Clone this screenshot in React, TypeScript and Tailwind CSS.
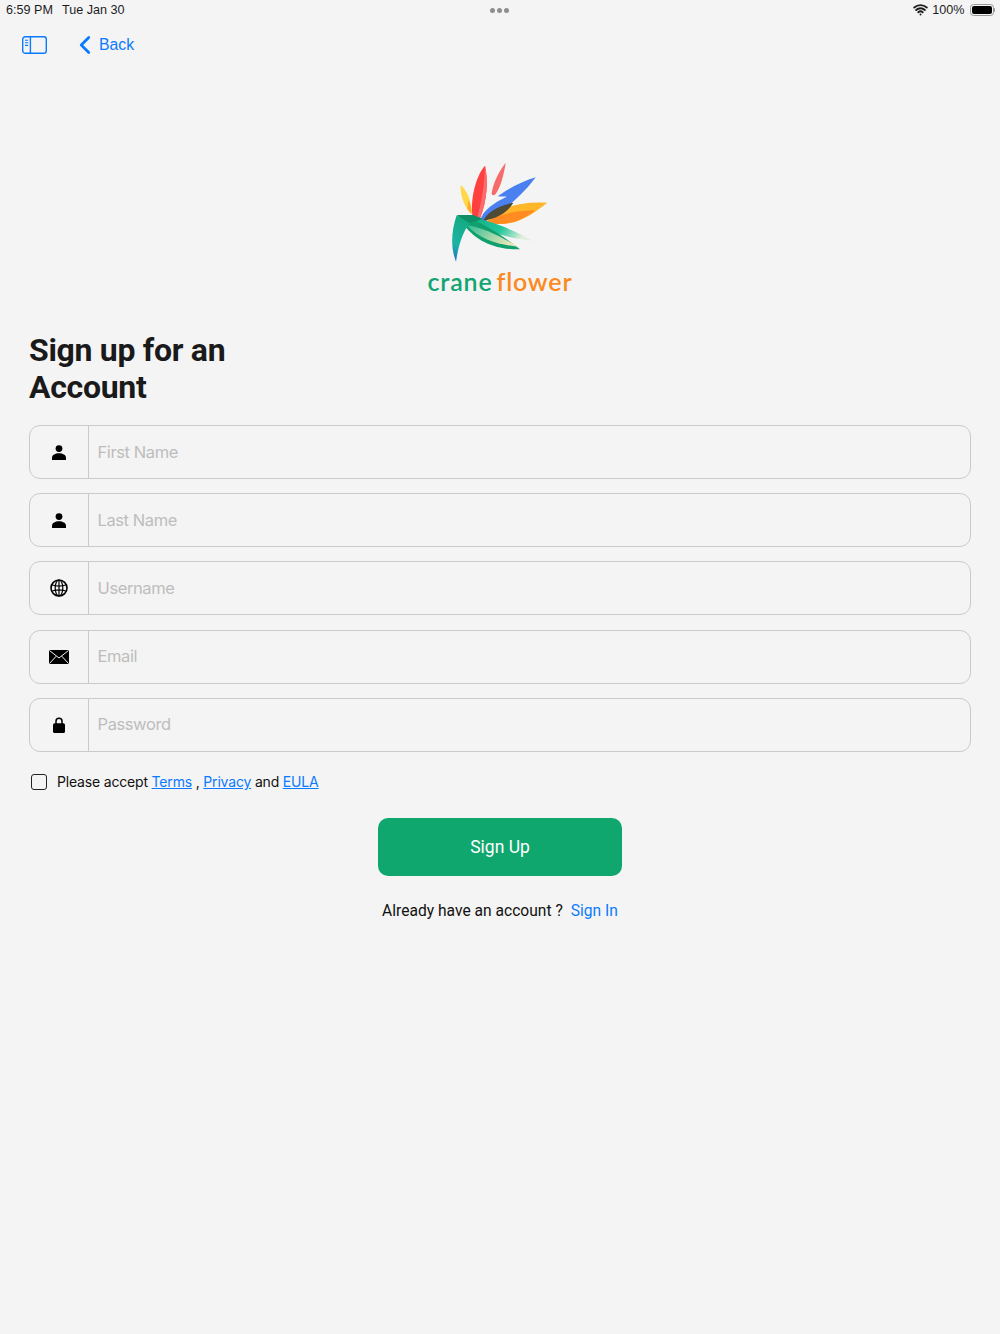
import { ChevronLeft, Wifi } from "lucide-react";
import type { ReactNode } from "react";

function UserIcon() {
  return (
    <svg width="14" height="15" viewBox="0 0 14 15" fill="#000">
      <circle cx="7" cy="3.6" r="3.4" />
      <path d="M0 15v-2.4C0 9.8 3.4 8.2 7 8.2s7 1.6 7 4.4V15z" />
    </svg>
  );
}

function GlobeIcon() {
  return (
    <svg width="18" height="18" viewBox="0 0 18 18" fill="none" stroke="#000" strokeWidth="1.2">
      <circle cx="9" cy="9" r="8" strokeWidth="1.6" />
      <ellipse cx="9" cy="9" rx="3.8" ry="8" />
      <path d="M9 1v16M1.6 5.8c4.2 1.5 10.6 1.5 14.8 0M1.6 12.2c4.2-1.5 10.6-1.5 14.8 0" />
    </svg>
  );
}

function MailIcon() {
  return (
    <svg width="20" height="14" viewBox="0 0 20 14">
      <rect width="20" height="14" rx="1.2" fill="#000" />
      <path d="M.6.6 10 8l9.4-7.4M.6 13.4l6.6-7.2M19.4 13.4l-6.6-7.2" fill="none" stroke="#f4f4f4" strokeWidth="1" />
    </svg>
  );
}

function LockIcon() {
  return (
    <svg width="12" height="16" viewBox="0 0 12 16">
      <path d="M3 7V4.2a3 3 0 0 1 6 0V7" fill="none" stroke="#000" strokeWidth="1.5" />
      <rect y="6.2" width="12" height="9.8" rx="1.6" fill="#000" />
    </svg>
  );
}

function SidebarIcon() {
  return (
    <svg width="25" height="18" viewBox="0 0 25 18" fill="none" stroke="#0a7aff" strokeWidth="1.4">
      <rect x=".7" y=".7" width="23.6" height="16.6" rx="2.6" />
      <path d="M8.4.7v16.6" />
      <path d="M3 4.2h3.2M3 6.8h3.2M3 9.4h3.2" strokeWidth="1.1" />
    </svg>
  );
}

function Logo() {
  return (
    <svg width="100" height="105" viewBox="0 0 300 315">
      <defs>
        <linearGradient id="tealFade" x1="0" y1="0" x2="1" y2="0.3">
          <stop offset="0" stopColor="#0fae84" />
          <stop offset="0.6" stopColor="#22c59a" />
          <stop offset="1" stopColor="#e2efdc" />
        </linearGradient>
        <linearGradient id="paleFade" x1="0" y1="0" x2="1" y2="0.4">
          <stop offset="0" stopColor="#2bbd95" />
          <stop offset="1" stopColor="#e6e6b8" />
        </linearGradient>
        <linearGradient id="leftLeaf" x1="0.5" y1="0" x2="0.3" y2="1">
          <stop offset="0" stopColor="#12ab80" />
          <stop offset="0.65" stopColor="#1db3a4" />
          <stop offset="1" stopColor="#1c78c4" />
        </linearGradient>
      </defs>
      <g transform="translate(-150 -30)">
        <path d="M182 105c18 15 33 45 33 87-20-17-35-52-33-87z" fill="#ffd84a" />
        <path d="M205 150c8 14 10 28 10 42-5-4-9-9-13-15z" fill="#ffa928" />
        <path d="M217 197c-7-65 18-130 38-150 10 43 7 103-15 158z" fill="#ff4040" />
        <path d="M255 47c10 43 7 103-15 158l-8-4c15-50 22-110 23-154z" fill="#ff6a6a" />
        <path d="M275 130c5-35 25-70 42-92-5 37-17 77-30 94-5 6-13 4-12-2z" fill="#f76b6b" />
        <path d="M240 212c8-32 45-56 80-72-8-2-20 2-26-2 30-22 75-45 113-56-30 42-95 105-150 132z" fill="#4a80f0" />
        <path d="M258 216C285 180 350 152 442 158 400 190 340 240 258 216z" fill="#ffb628" />
        <path d="M258 216C290 195 350 180 405 182 375 205 320 235 258 216z" fill="#ff8b22" />
        <path d="M250 212C258 190 290 168 340 158 325 185 295 205 250 212z" fill="#4d4a38" />
        <path d="M205 205c55 0 135 35 193 67-58-4-138-22-193-67z" fill="url(#tealFade)" />
        <path d="M175 197c55 8 125 53 185 101-70 2-145-23-185-101z" fill="#10a06d" />
        <path d="M200 225c50 7 105 37 155 65-55-5-115-20-155-65z" fill="url(#paleFade)" />
        <path d="M170 196c-15 44-20 94-2 139 7-45 17-85 42-117z" fill="url(#leftLeaf)" />
        <path d="M170 195h50l30 12-42 12z" fill="#0e8f66" />
      </g>
    </svg>
  );
}

const fields: { label: string; icon: ReactNode }[] = [
  { label: "First Name", icon: <UserIcon /> },
  { label: "Last Name", icon: <UserIcon /> },
  { label: "Username", icon: <GlobeIcon /> },
  { label: "Email", icon: <MailIcon /> },
  { label: "Password", icon: <LockIcon /> },
];

export default function App() {
  return (
    <div className="flex h-[1334px] flex-col overflow-hidden bg-[#f4f4f4] font-['Inter',sans-serif] text-black">
      {/* status bar */}
      <div className="relative flex h-[20px] items-center justify-between pl-[6px] pr-[5px] font-['Liberation_Sans',sans-serif] text-[12.6px] text-[#1c1c1e]">
        <div className="flex gap-[9px]">
          <span>6:59 PM</span>
          <span>Tue Jan 30</span>
        </div>
        <div className="absolute left-[490px] top-[8px] flex gap-[2px]">
          <span className="h-[5px] w-[5px] rounded-full bg-[#8e8e8e]" />
          <span className="h-[5px] w-[5px] rounded-full bg-[#8e8e8e]" />
          <span className="h-[5px] w-[5px] rounded-full bg-[#8e8e8e]" />
        </div>
        <div className="flex items-center gap-[4px]">
          <Wifi size={15} strokeWidth={3} />
          <span>100%</span>
          <div className="ml-[1px] flex items-center">
            <div className="h-[12px] w-[24px] rounded-[3.5px] border border-[#999] p-[1px]">
              <div className="h-full w-full rounded-[2px] bg-black" />
            </div>
            <div className="h-[4px] w-[1.5px] rounded-r bg-[#999]" />
          </div>
        </div>
      </div>

      {/* nav */}
      <div className="flex h-[49px] items-center pl-[22px]">
        <SidebarIcon />
        <div className="ml-[25px] flex items-center text-[#0a7aff]">
          <ChevronLeft size={30} strokeWidth={2.2} className="-ml-[2px]" />
          <span className="-ml-[1px] font-['Liberation_Sans',sans-serif] text-[15.8px]">Back</span>
        </div>
      </div>

      {/* logo */}
      <div className="mt-[91px] flex flex-col items-center">
        <div className="h-[105px]">
          <Logo />
        </div>
        <div className="mt-[1px] flex h-[30px] items-center gap-[4px] font-['Lato',sans-serif] text-[25px] font-semibold leading-none tracking-[0.8px]">
          <span className="text-[#12a571]">crane</span>
          <span className="text-[#fb8a22]">flower</span>
        </div>
      </div>

      {/* form */}
      <div className="mt-[36px] px-[29px]">
        <h1 className="font-['Roboto',sans-serif] text-[32px] font-bold leading-[37px] tracking-[-0.3px] text-[#1a1a1a]">
          Sign up for an
          <br />
          Account
        </h1>

        <div className="mt-[19px] flex flex-col gap-[14.2px]">
          {fields.map((f) => (
            <div key={f.label} className="flex h-[54px] items-center rounded-[11px] border-[1.5px] border-[#cacaca]">
              <div className="flex h-full w-[58.5px] shrink-0 items-center justify-center border-r border-[#cacaca]">
                {f.icon}
              </div>
              <span className="pl-[9px] text-[16.5px] tracking-[-0.4px] text-[#bdbdbd]">{f.label}</span>
            </div>
          ))}
        </div>

        <div className="mt-[20px] flex h-[20px] items-center text-[14px] tracking-[-0.18px] text-[#111]">
          <div className="ml-[2px] h-[16px] w-[16px] rounded-[3px] border-[1.5px] border-[#222]" />
          <span className="ml-[10px]">
            Please accept <span className="text-[#0a7aff] underline">Terms</span> ,{" "}
            <span className="text-[#0a7aff] underline">Privacy</span> and{" "}
            <span className="text-[#0a7aff] underline">EULA</span>
          </span>
        </div>

        <div className="mt-[26px] flex justify-center">
          <div className="flex h-[58px] w-[244px] items-center justify-center rounded-[10px] bg-[#10a76f] font-['Roboto',sans-serif] text-[17.5px] text-white">
            Sign Up
          </div>
        </div>

        <div className="mt-[24px] flex justify-center font-['Roboto',sans-serif] text-[15.6px] leading-[22px] text-[#111]">
          <span>Already have an account ?</span>
          <span className="ml-[8px] text-[#0a7aff]">Sign In</span>
        </div>
      </div>
    </div>
  );
}
